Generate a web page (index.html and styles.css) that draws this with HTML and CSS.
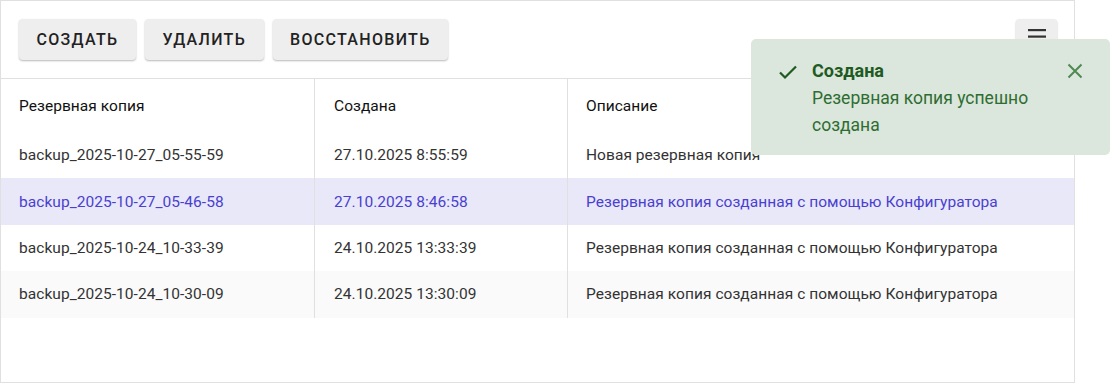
FILE: index.html
```html
<!DOCTYPE html>
<html lang="ru">
<head>
<meta charset="utf-8">
<title>Резервные копии</title>
<link rel="stylesheet" href="styles.css">
</head>
<body>
<div class="panel">
  <div class="toolbar">
    <div class="actions">
      <button class="btn">Создать</button>
      <button class="btn">Удалить</button>
      <button class="btn">Восстановить</button>
    </div>
    <button class="btn menu-btn" aria-label="Меню">
      <svg width="18" height="16" viewBox="0 0 18 16"><rect x="0" y="0" width="18" height="2.2" fill="#333"/><rect x="0" y="6.5" width="18" height="2.2" fill="#333"/><rect x="0" y="13" width="18" height="2.2" fill="#333"/></svg>
    </button>
  </div>
  <div class="table">
    <div class="row head">
      <div class="cell">Резервная копия</div>
      <div class="cell">Создана</div>
      <div class="cell">Описание</div>
    </div>
    <div class="row">
      <div class="cell">backup_2025-10-27_05-55-59</div>
      <div class="cell">27.10.2025 8:55:59</div>
      <div class="cell">Новая резервная копия</div>
    </div>
    <div class="row selected">
      <div class="cell">backup_2025-10-27_05-46-58</div>
      <div class="cell">27.10.2025 8:46:58</div>
      <div class="cell">Резервная копия созданная с помощью Конфигуратора</div>
    </div>
    <div class="row">
      <div class="cell">backup_2025-10-24_10-33-39</div>
      <div class="cell">24.10.2025 13:33:39</div>
      <div class="cell">Резервная копия созданная с помощью Конфигуратора</div>
    </div>
    <div class="row alt">
      <div class="cell">backup_2025-10-24_10-30-09</div>
      <div class="cell">24.10.2025 13:30:09</div>
      <div class="cell">Резервная копия созданная с помощью Конфигуратора</div>
    </div>
  </div>
  <div class="toast">
    <svg class="toast-icon" width="20" height="16" viewBox="0 0 20 16"><path d="M2 8.5 L7 13.5 L18 2.5" fill="none" stroke="#1e5a22" stroke-width="2.2"/></svg>
    <div class="toast-body">
      <div class="toast-title">Создана</div>
      <div class="toast-text">Резервная копия успешно создана</div>
    </div>
    <svg class="toast-close" width="16" height="16" viewBox="0 0 16 16"><path d="M1.5 1.5 L14.5 14.5 M14.5 1.5 L1.5 14.5" stroke="#4f8a51" stroke-width="2" fill="none"/></svg>
  </div>
</div>
</body>
</html>
```
FILE: styles.css
```css
* { box-sizing: border-box; }
body {
  margin: 0;
  background: #fff;
  font-family: Roboto, "Noto Sans", "Liberation Sans", sans-serif;
}
.panel {
  position: relative;
  width: 1075px;
  height: 383px;
  border: 1px solid #e0e0e0;
  background: #fff;
}
.toolbar {
  display: flex;
  justify-content: space-between;
  align-items: flex-start;
  padding: 18px 17px 0 18px;
  height: 78px;
  border-bottom: 1px solid #e0e0e0;
}
.actions {
  display: flex;
  gap: 9px;
}
.btn {
  height: 41px;
  padding: 0 17.5px;
  border: none;
  border-radius: 4px;
  background: #eeeeee;
  box-shadow: 0 1px 2px rgba(0,0,0,0.28);
  font-family: Roboto, "Noto Sans", sans-serif;
  font-size: 16px;
  font-weight: 500;
  letter-spacing: 1.3px;
  text-transform: uppercase;
  color: #222;
}
.menu-btn {
  width: 41px;
  padding: 10px 0 0 0;
  display: flex;
  justify-content: center;
  align-items: flex-start;
}
.table {
  display: flex;
  flex-direction: column;
}
.row {
  display: grid;
  grid-template-columns: 314px 253px 1fr;
  height: 46.4px;
  align-items: stretch;
  font-size: 15.5px;
  letter-spacing: 0.05px;
  color: #333;
}
.row.head {
  height: 53px;
  color: #111;
}
.cell {
  display: flex;
  align-items: center;
  padding-left: 18px;
  border-right: 1px solid #e0e0e0;
}
.cell:nth-child(2) { padding-left: 19px; }
.cell:last-child { border-right: none; }
.row.selected { background: #e8e8f8; color: #4a3fd0; }
.row.alt { background: #fafafa; }
.toast {
  position: absolute;
  top: 38px;
  left: 750px;
  width: 359px;
  height: 116px;
  background: #dbe6dc;
  border-radius: 5px;
  display: flex;
  align-items: flex-start;
  padding: 21px 0 0 27px;
}
.toast-icon { margin-top: 4px; flex: none; }
.toast-body {
  margin-left: 14px;
  width: 240px;
  color: #2e6d31;
  font-size: 17.5px;
}
.toast-title {
  font-weight: 700;
  font-size: 18px;
  color: #1e5a22;
  line-height: 22px;
}
.toast-text {
  line-height: 27px;
  margin-top: 3px;
}
.toast-close {
  margin-left: 15px;
  margin-top: 3px;
  flex: none;
}
```
